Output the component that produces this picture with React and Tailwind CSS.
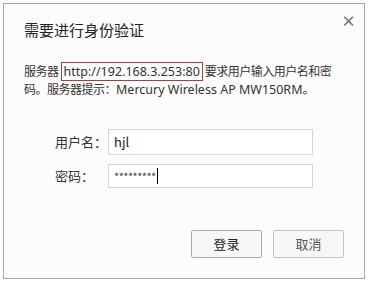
export default function App() {
  return (
    <div
      className="w-[373px] h-[287px] bg-white pt-[3px] pl-[3px]"
      style={{ fontFamily: '"Noto Sans CJK SC", "Liberation Sans", sans-serif' }}
    >
      <div className="w-[362px] h-[276px] bg-[#fcfcfc] border border-[#a8a8a8] flex flex-col">
        <div className="flex items-start justify-between pl-[20px] pr-[8px] pt-[10px]">
          <h1 className="mt-[5px] text-[15px] leading-[22px] text-[#222]">需要进行身份验证</h1>
          <span className="text-[15px] leading-[14px] text-[#777] font-bold">×</span>
        </div>

        <p className="mt-[21px] pl-[20px] text-[12px] leading-[17px] text-[#333] tracking-[-0.5px]">
          服务器
          <span
            className="border border-[#b33a3a] px-[2px] mx-[2px] text-[12.5px] tracking-[0px]"
            style={{ fontFamily: '"Noto Sans", sans-serif' }}
          >
            http://192.168.3.253:80
          </span>
          要求用户输入用户名和密
          <br />
          码。服务器提示：
          <span className="text-[12.5px] tracking-[0px]" style={{ fontFamily: '"Noto Sans", sans-serif' }}>
            Mercury Wireless AP MW150RM
          </span>
          。
        </p>

        <div className="mt-[31px] flex flex-col gap-[9px]">
          <div className="flex items-center">
            <label className="w-[53px] ml-[51px] text-[13px] text-[#333]">用户名：</label>
            <div className="w-[205px] h-[26px] border border-[#d6d6d6] bg-white flex items-center px-[5px] text-[13px] text-[#222]">
              hjl
            </div>
          </div>
          <div className="flex items-center">
            <label className="w-[53px] ml-[51px] text-[13px] text-[#333]">密码：</label>
            <div className="w-[205px] h-[24px] border border-[#d6d6d6] bg-white flex items-center px-[5px] text-[11px] text-[#444] tracking-[-0.5px]">
              *********
              <span className="w-[1px] h-[16px] bg-black ml-[1px]" />
            </div>
          </div>
        </div>

        <div className="mt-[42px] flex justify-end gap-[11px] pr-[20px]">
          <button className="w-[71px] h-[28px] border border-[#acacac] rounded-[2px] bg-[#f7f7f7] text-[13px] text-[#222]">
            登录
          </button>
          <button className="w-[71px] h-[28px] border border-[#c4c4c4] rounded-[2px] bg-[#f7f7f7] text-[13px] text-[#555]">
            取消
          </button>
        </div>
      </div>
    </div>
  );
}
